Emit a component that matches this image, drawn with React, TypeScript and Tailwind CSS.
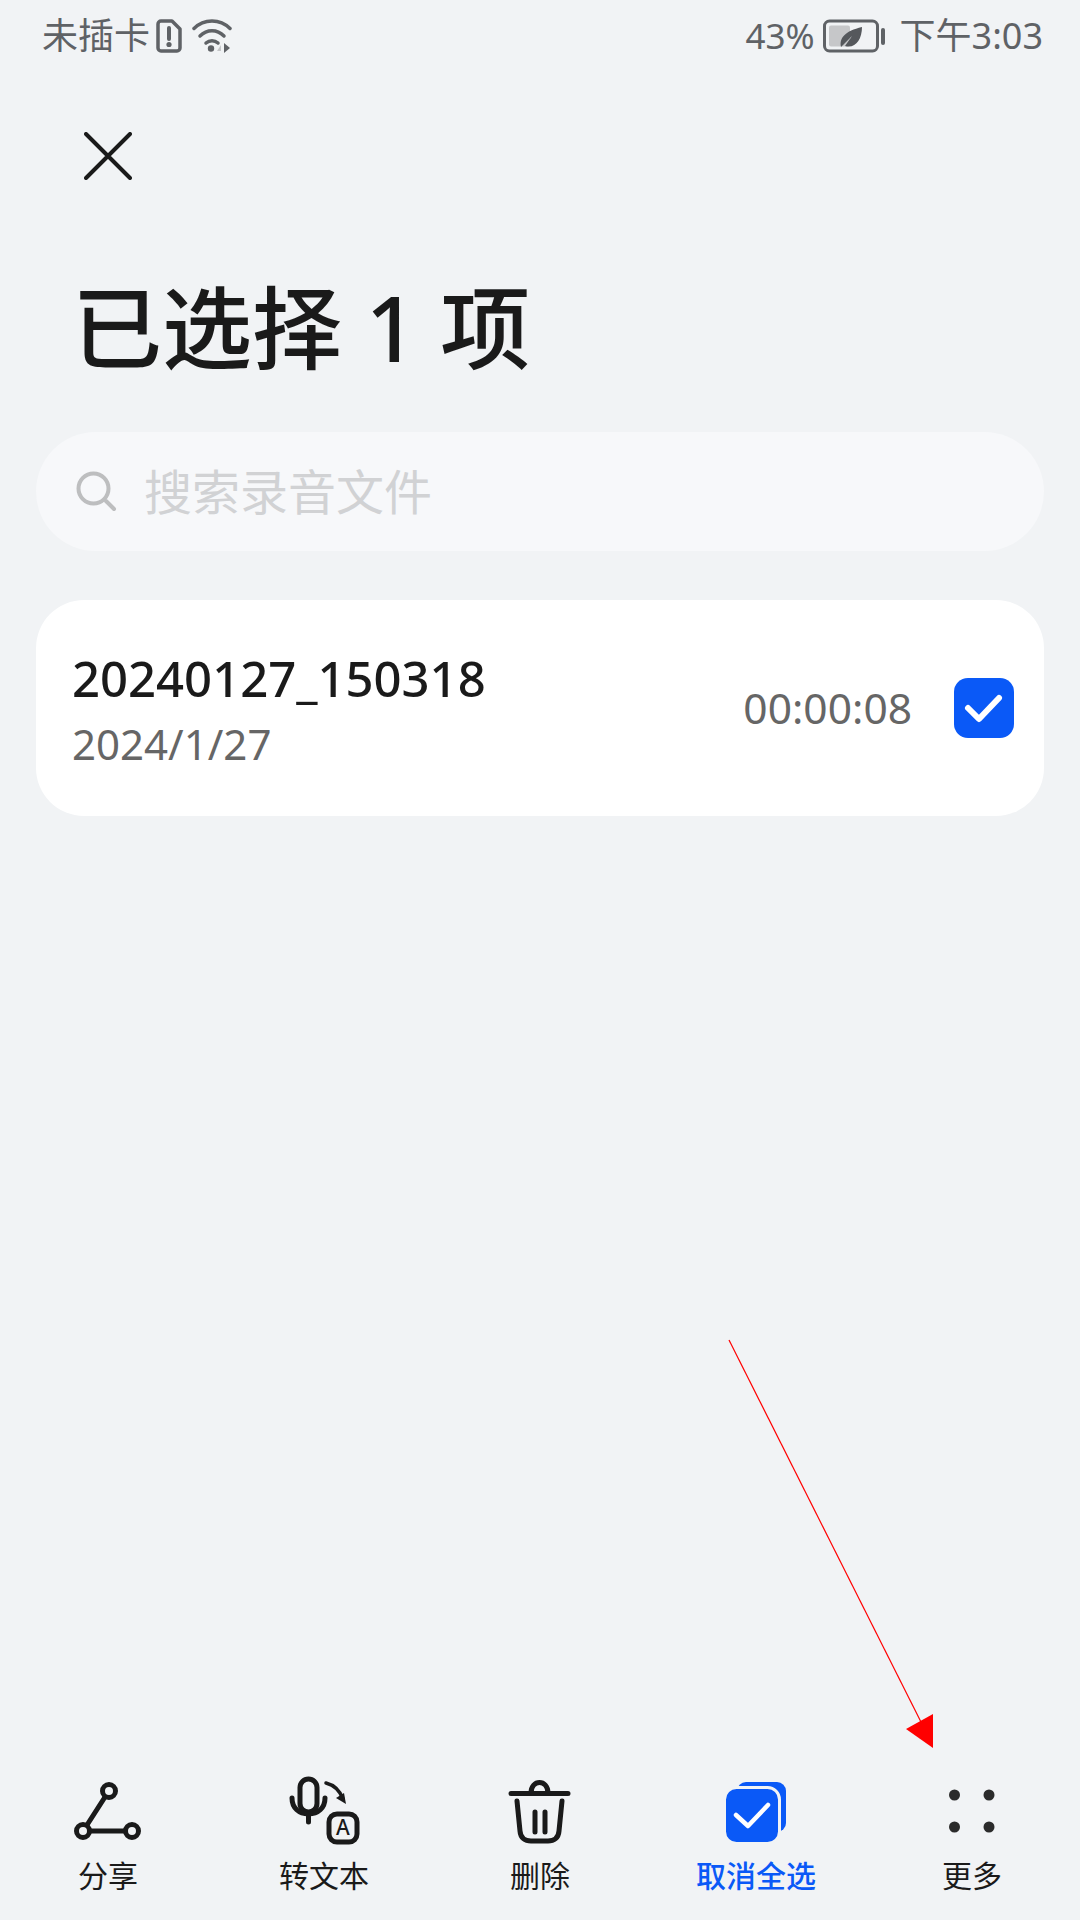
const PAGE_FONT = "font-['Noto_Sans','Noto_Sans_CJK_SC',sans-serif]";

function SimIcon() {
  return (
    <svg width="26" height="34" viewBox="0 0 26 34" fill="none">
      <path d="M5 2h11l8 8v19a3 3 0 0 1-3 3H5a3 3 0 0 1-3-3V5a3 3 0 0 1 3-3z" stroke="#5f6266" strokeWidth="3.500" strokeLinejoin="round" />
      <path d="M13 9v11" stroke="#5f6266" strokeWidth="4" strokeLinecap="round" />
      <circle cx="13" cy="25.500" r="2.600" fill="#5f6266" />
    </svg>
  );
}

function WifiIcon() {
  return (
    <svg width="40" height="34" viewBox="0 0 40 34" fill="none">
      <path d="M2 9.500C12-.5 28-.5 38 9.500" stroke="#5f6266" strokeWidth="3.500" strokeLinecap="round" />
      <path d="M8 17c7-7 17-7 24 0" stroke="#5f6266" strokeWidth="3.500" strokeLinecap="round" />
      <path d="M14 24c3.500-3 8.500-3 12 0" stroke="#5f6266" strokeWidth="3.500" strokeLinecap="round" />
      <circle cx="19" cy="29.500" r="3.200" fill="#5f6266" />
      <path d="M29 26l-4 6h4z" fill="#c4c5c7" />
      <path d="M32 24v10l6-5z" fill="#5f6266" />
    </svg>
  );
}

function BatteryIcon() {
  return (
    <svg width="62" height="34" viewBox="0 0 62 34" fill="none">
      <rect x="1.500" y="2" width="53" height="30" rx="5" stroke="#5f6266" strokeWidth="3" />
      <rect x="6" y="6.500" width="21" height="21" rx="2" fill="#c6c7c9" />
      <rect x="58" y="9" width="4" height="17" rx="2" fill="#5f6266" />
      <path d="M18 28c-2-9 4-16 21-20 0 13-7 22-17 19l7-10-11 11z" fill="#55585c" />
    </svg>
  );
}

function CheckBox() {
  return (
    <svg width="60" height="60" viewBox="0 0 60 60">
      <rect width="60" height="60" rx="14" fill="#0a59f7" />
      <path d="M14 30l11 11 20-21" fill="none" stroke="#fff" strokeWidth="6" strokeLinecap="round" strokeLinejoin="round" />
    </svg>
  );
}

function ShareIcon() {
  return (
    <svg width="72" height="72" viewBox="0 0 72 72" fill="none" stroke="#1a1a1a" strokeWidth="5">
      <circle cx="37" cy="15" r="6.500" />
      <circle cx="11" cy="55" r="6.500" />
      <circle cx="60" cy="55" r="6.500" />
      <path d="M33 21L15 49M18 55h35" />
    </svg>
  );
}

function TranscribeIcon() {
  return (
    <svg width="72" height="72" viewBox="0 0 72 72" fill="none" stroke="#1a1a1a" strokeWidth="5" strokeLinecap="round">
      <rect x="12" y="3" width="17" height="33" rx="8.500" />
      <path d="M4 22c0 10 7 16 16.500 16S37 32 37 22M20.500 38v8" />
      <path d="M38 7c8 2 14 8 17 16" strokeWidth="3.500" />
      <path d="M58 28l-10-6 8-5z" fill="#1a1a1a" stroke="none" />
      <rect x="41" y="38" width="28" height="28" rx="8" />
      <text x="55" y="59" textAnchor="middle" fontSize="21" fontWeight="500" fill="#1a1a1a" stroke="none">A</text>
    </svg>
  );
}

function TrashIcon() {
  return (
    <svg width="72" height="72" viewBox="0 0 72 72" fill="none" stroke="#1a1a1a" strokeWidth="5" strokeLinecap="round">
      <path d="M7 17.500h57M27 17c0-14 17-14 17 0" />
      <path d="M13 25l3 30c.5 7 5 10 11 10h17c6 0 10.500-3 11-10l3-30" />
      <path d="M31 36v20M41 36v20" />
    </svg>
  );
}

function DeselectIcon() {
  return (
    <svg width="72" height="72" viewBox="0 0 72 72" fill="none">
      <rect x="17" y="6" width="49" height="50" rx="9" fill="#0a59f7" />
      <rect x="4.500" y="11.500" width="55" height="56" rx="12" fill="#0a59f7" stroke="#f1f3f5" strokeWidth="3" />
      <path d="M16 39l12 11 20-21" stroke="#fff" strokeWidth="4.500" strokeLinecap="round" strokeLinejoin="round" />
    </svg>
  );
}

function MoreIcon() {
  return (
    <svg width="72" height="72" viewBox="0 0 72 72" fill="#2b2b2b">
      <circle cx="18.500" cy="19" r="5.500" />
      <circle cx="53" cy="19" r="5.500" />
      <circle cx="18.500" cy="51" r="5.500" />
      <circle cx="53" cy="51" r="5.500" />
    </svg>
  );
}

export default function App() {
  const actions = [
    { label: '分享', icon: <ShareIcon />, active: false },
    { label: '转文本', icon: <TranscribeIcon />, active: false },
    { label: '删除', icon: <TrashIcon />, active: false },
    { label: '取消全选', icon: <DeselectIcon />, active: true },
    { label: '更多', icon: <MoreIcon />, active: false },
  ];

  return (
    <div className={`relative w-[1080px] h-[1920px] overflow-hidden flex flex-col bg-[#f1f3f5] ${PAGE_FONT}`}>
      {/* Status bar */}
      <div className="flex items-center justify-between h-[72px] pl-[42px] pr-[37px] text-[36px] text-[#5f6266]">
        <div className="flex items-center">
          <span>未插卡</span>
          <span className="ml-[6px] flex"><SimIcon /></span>
          <span className="ml-[10px] flex"><WifiIcon /></span>
        </div>
        <div className="flex items-center">
          <span className="text-[35px]">43%</span>
          <span className="ml-[8px] flex"><BatteryIcon /></span>
          <span className="ml-[15px]">下午3:03</span>
        </div>
      </div>

      {/* Close */}
      <div className="mt-[60px] ml-[84px]">
        <svg width="48" height="48" viewBox="0 0 48 48" stroke="#1a1a1a" strokeWidth="4" strokeLinecap="round">
          <path d="M2 2l44 44M46 2L2 46" />
        </svg>
      </div>

      {/* Title */}
      <h1 className="mt-[92px] ml-[72px] text-[90px] leading-[110px] font-medium text-[#1a1a1a]">已选择 1 项</h1>

      {/* Search */}
      <div className="mt-[50px] mx-[36px] h-[119px] rounded-full bg-[#f7f8fa] flex items-center pl-[40px]">
        <svg width="42" height="42" viewBox="0 0 42 42" fill="none" stroke="#bdbebf" strokeWidth="4" strokeLinecap="round">
          <circle cx="17.500" cy="17.500" r="15" />
          <path d="M30 30l8 8" />
        </svg>
        <span className="ml-[26px] text-[48px] text-[#d1d2d4]">搜索录音文件</span>
      </div>

      {/* Recording */}
      <div className="mt-[49px] mx-[36px] h-[216px] rounded-[48px] bg-white flex items-center pl-[36px] pr-[30px]">
        <div className="flex-1 flex flex-col pt-[2px]">
          <span className="text-[49px] leading-[64px] font-medium text-[#1a1a1a]">20240127_150318</span>
          <span className="mt-[6px] text-[42px] leading-[56px] text-[#666666]">2024/1/27</span>
        </div>
        <span className="text-[42.500px] text-[#666666]">00:00:08</span>
        <span className="ml-[42px] flex"><CheckBox /></span>
      </div>

      {/* Toolbar */}
      <div className="mt-auto grid grid-cols-5 pb-[24px]">
        {actions.map((a) => (
          <div key={a.label} className="flex flex-col items-center">
            {a.icon}
            <span className={`text-[30px] leading-[40px] mt-[8px] ${a.active ? 'text-[#0a59f7] font-medium' : 'text-[#1a1a1a]'}`}>
              {a.label}
            </span>
          </div>
        ))}
      </div>

      {/* Red annotation arrow */}
      <svg className="absolute inset-0 pointer-events-none" width="1080" height="1920">
        <line x1="729" y1="1340" x2="921" y2="1722" stroke="#f00" strokeWidth="1.200" />
        <polygon points="906,1729 933,1714 933,1748" fill="#f00" />
      </svg>
    </div>
  );
}
